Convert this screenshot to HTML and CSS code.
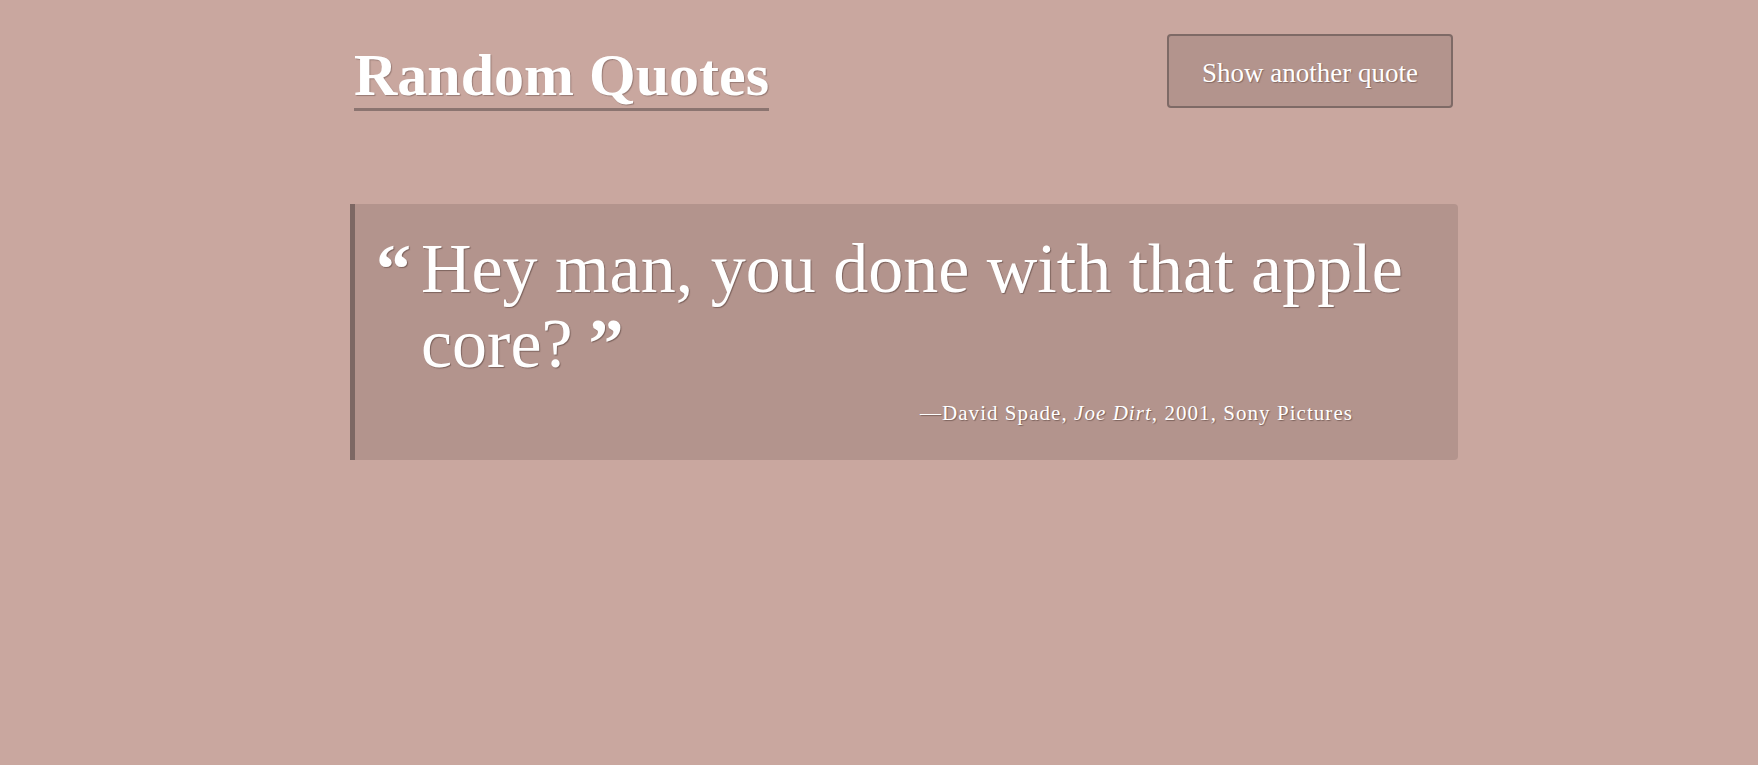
FILE: index.html
```html
<!DOCTYPE html>
<html lang="en">
<head>
<meta charset="utf-8">
<title>Random Quotes</title>
<link rel="stylesheet" href="styles.css">
</head>
<body>
<div class="page">
  <header class="header">
    <h1 class="title">Random Quotes</h1>
    <button class="btn" type="button">Show another quote</button>
  </header>
  <blockquote class="quote">
    <div class="quote-body">
      <span class="mark-open">“</span>
      <p class="quote-text">Hey man, you done with that apple core?<span class="mark-close">”</span></p>
    </div>
    <footer class="cite">—David Spade, <em>Joe Dirt</em>, 2001, Sony Pictures</footer>
  </blockquote>
</div>
</body>
</html>
```

FILE: styles.css
```css
html, body {
  margin: 0;
  padding: 0;
}
body {
  background: #c9a79f;
  color: #ffffff;
  font-family: "Liberation Serif", "DejaVu Serif", serif;
  height: 765px;
}
.page {
  padding: 34px 300px 0 350px;
}
.header {
  display: flex;
  justify-content: space-between;
  align-items: flex-start;
  padding: 0 5px 0 4px;
}
.title {
  margin: 11px 0 0;
  font-size: 60px;
  line-height: 60px;
  font-weight: 700;
  padding-bottom: 3px;
  border-bottom: 3px solid #8b7470;
  text-shadow: 1px 1px 1px rgba(60, 40, 36, 0.35);
}
.btn {
  width: 286px;
  height: 74px;
  background: #b3948d;
  border: 2px solid #7e6a66;
  border-radius: 4px;
  color: #ffffff;
  font-family: "Liberation Serif", "DejaVu Serif", serif;
  font-size: 27px;
  padding: 5px 0 0;
  text-shadow: 1px 1px 1px rgba(60, 40, 36, 0.4);
  cursor: pointer;
}
.quote {
  margin: 93px 0 0;
  background: #b3948d;
  border-left: 5px solid #7d6864;
  border-radius: 0 4px 4px 0;
  padding: 27px 40px 32px 21px;
  text-shadow: 1px 1px 1px rgba(60, 40, 36, 0.45);
}
.quote-body {
  display: flex;
  align-items: flex-start;
}
.mark-open {
  flex: 0 0 45px;
  font-size: 70px;
  line-height: 75px;
  font-weight: 700;
}
.quote-text {
  margin: 0;
  font-size: 70px;
  line-height: 75px;
}
.mark-close {
  font-weight: 700;
  margin-left: 16px;
}
.cite {
  margin-top: 17px;
  text-align: right;
  padding-right: 65px;
  font-size: 21px;
  line-height: 30px;
  letter-spacing: 1.05px;
}
.cite em {
  font-style: italic;
}
```
